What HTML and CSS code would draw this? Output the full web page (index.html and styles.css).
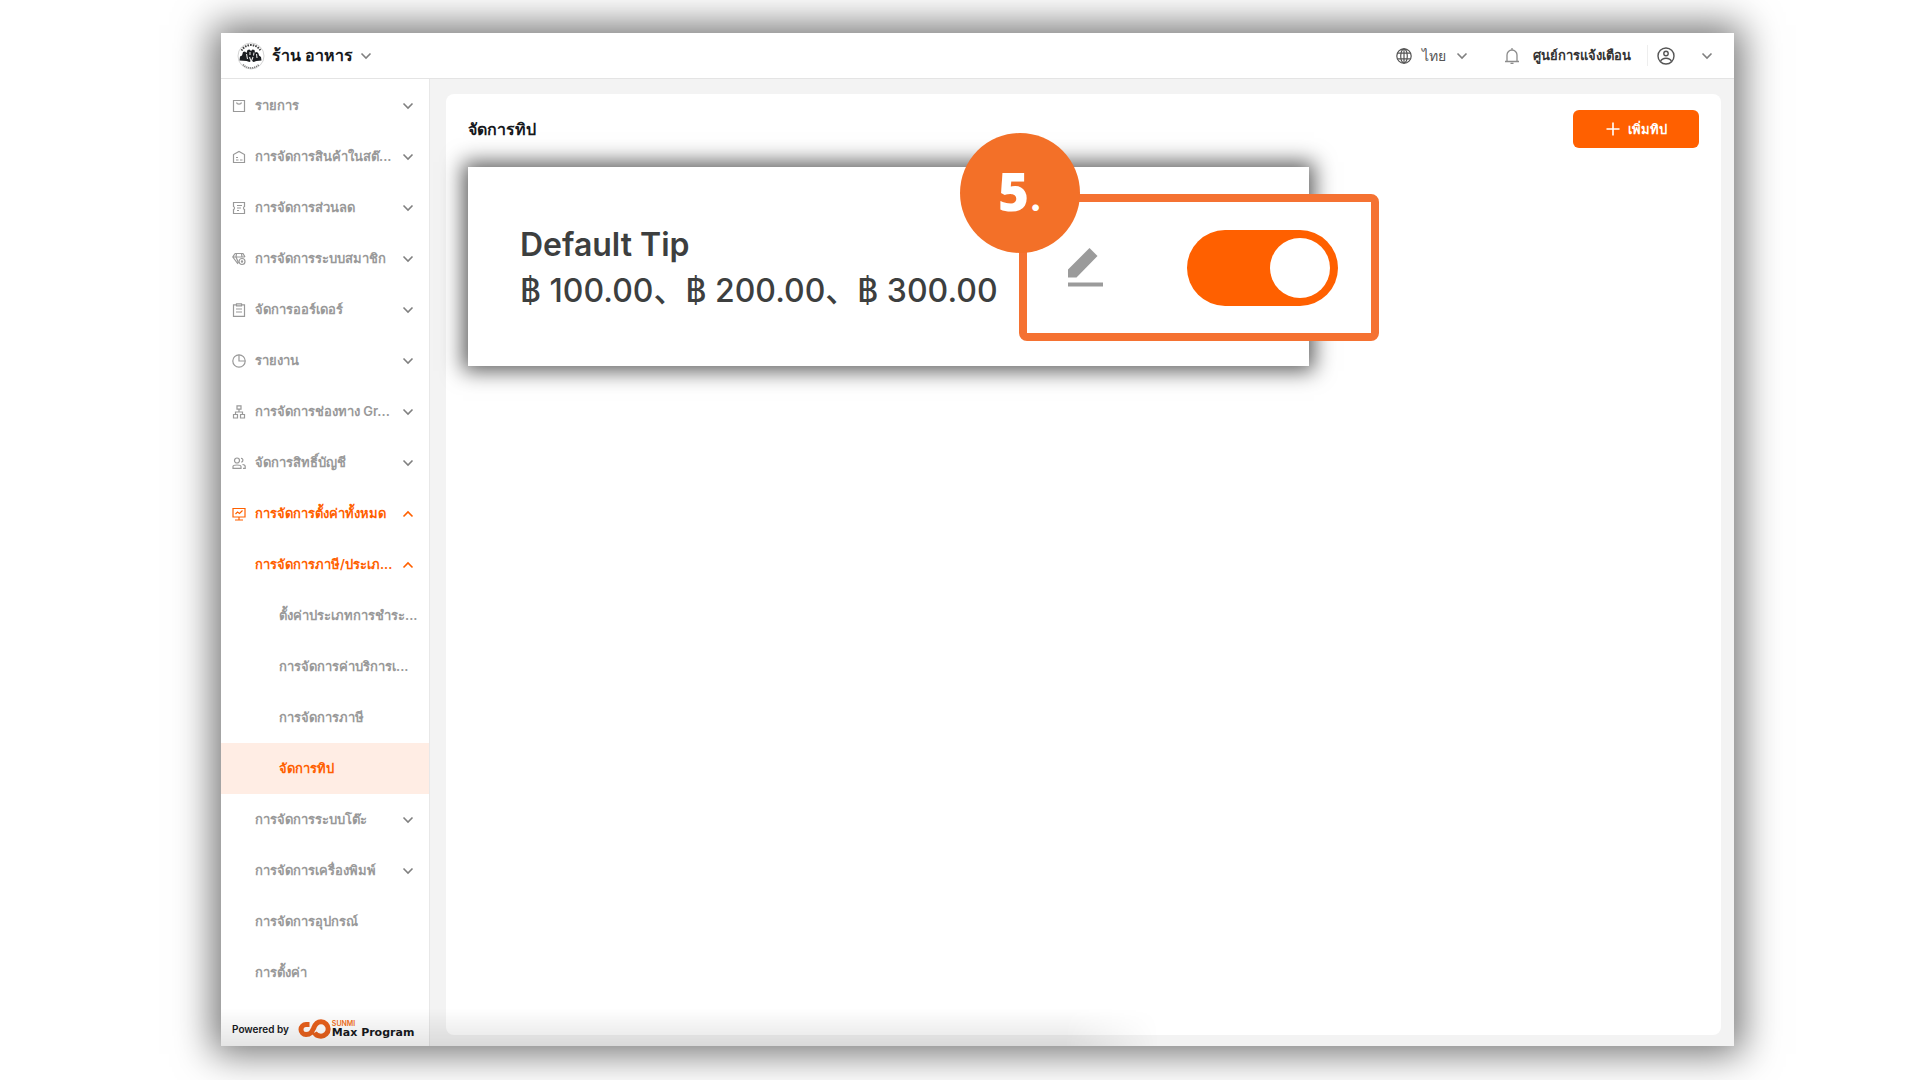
FILE: index.html
```html
<!DOCTYPE html>
<html lang="th">
<head>
    <meta charset="UTF-8">
    <title>จัดการทิป</title>
    <link rel="stylesheet" href="styles.css">
</head>
<body>
    <!-- shared chevron -->
    <svg class="defs" width="0" height="0">
        <symbol id="chevron" viewBox="0 0 12 12"><path d="M1.500 3.500 6 8l4.500-4.500" fill="none" stroke="currentColor" stroke-width="1.600"/></symbol>
    </svg>

    <div class="window">
        <header class="topbar">
            <button class="store">
                <svg class="store-logo" viewBox="0 0 28 28">
                    <circle cx="14" cy="14" r="13" fill="#fff" stroke="#c8c8c8" stroke-width=".8"/>
                    <path d="M4.500 8.500A11 11 0 0 1 23.500 8.500" fill="none" stroke="#444" stroke-width="2" stroke-dasharray="1.600 1"/>
                    <path d="M6 22.500a11 11 0 0 0 16 0" fill="none" stroke="#777" stroke-width="1.600" stroke-dasharray="1.200 .8"/>
                    <path d="M2.500 18.500l.5-4 2-1 1-3.500 2-.5 1.500 1.500 1-3 2-.5 1.500 1.500 1.500-1.500 2 .5.500 2.500 2-.5 1.500 1.500.5 2 2 1.500.5 3.500-5 .5-3 1-2-1.500-2 1.500-3-1z" fill="#1b1d20"/>
                    <path d="M9.500 12l1 5M13 10v3M17 10.500l-.5 3M12.500 15l1.500 4M16 15l-1.500 4M19.500 12l.5 4" stroke="#e4e4e4" stroke-width="1.100"/>
                </svg>
                <span>ร้าน อาหาร</span>
                <svg class="chev"><use href="#chevron"/></svg>
            </button>
            <div class="tools">
                <button class="lang">
                    <svg class="icon-16" viewBox="0 0 16 16" fill="none" stroke="currentColor" stroke-width="1.200"><circle cx="8" cy="8" r="7.200"/><ellipse cx="8" cy="8" rx="3.300" ry="7.200"/><path d="M8 .8v14.400M1.500 5.200h13M1.500 10.800h13"/></svg>
                    <span>ไทย</span>
                    <svg class="chev"><use href="#chevron"/></svg>
                </button>
                <button class="notice">
                    <svg class="icon-16" viewBox="0 0 16 16" fill="none" stroke="#8c8c8c" stroke-width="1.300"><path d="M1 13.500h14M3 13.500V7a5 5 0 0 1 10 0v6.500M8 0v2M6.500 15.400h3"/></svg>
                    <span>ศูนย์การแจ้งเตือน</span>
                </button>
                <button class="account" aria-label="Account">
                    <svg class="icon-18" viewBox="0 0 18 18" fill="none" stroke="currentColor" stroke-width="1.400"><circle cx="9" cy="9" r="8"/><circle cx="9" cy="6.500" r="2.200"/><path d="M3.500 14.500c1-2.400 3-3.300 5.500-3.300s4.500.9 5.500 3.300"/></svg>
                    <svg class="chev"><use href="#chevron"/></svg>
                </button>
            </div>
        </header>

        <div class="body">
            <aside class="sidebar">
                <nav class="menu">
                    <button class="item">
                        <svg class="icon" viewBox="0 0 14 14"><path d="M1.500 1.500h11v11h-11zM4.500 3.500c.5 2.200 4.500 2.200 5 0"/></svg>
                        <span>รายการ</span><svg class="chev"><use href="#chevron"/></svg>
                    </button>
                    <button class="item">
                        <svg class="icon" viewBox="0 0 14 14"><path d="M1.500 12.500v-8L7 1.500l5.500 3v8zM4 7.500h2M4 10h2.500M8 10h2.500" /></svg>
                        <span>การจัดการสินค้าในสต๊...</span><svg class="chev"><use href="#chevron"/></svg>
                    </button>
                    <button class="item">
                        <svg class="icon" viewBox="0 0 14 14"><path d="M1.500 1.500h11v4c-1.300.3-1.300 2.700 0 3v4h-11v-4c1.300-.3 1.300-2.700 0-3zM5 4.500h5M5 7h4M5 9.500h2"/></svg>
                        <span>การจัดการส่วนลด</span><svg class="chev"><use href="#chevron"/></svg>
                    </button>
                    <button class="item">
                        <svg class="icon" viewBox="0 0 14 14"><path d="M3 1.500h8l2 3.500M3 1.500.8 5l5.200 7M.8 5h12M4.500 1.500 4 5l2.500 6M9.500 1.500 10 5"/><circle cx="10" cy="9.500" r="3"/><circle cx="10" cy="9.500" r=".6"/></svg>
                        <span>การจัดการระบบสมาชิก</span><svg class="chev"><use href="#chevron"/></svg>
                    </button>
                    <button class="item">
                        <svg class="icon" viewBox="0 0 14 14"><path d="M4.500 1.800H1.500v11.500h11V1.800h-3M4.500.8h5v2h-5zM4 6h6M4 9h6"/></svg>
                        <span>จัดการออร์เดอร์</span><svg class="chev"><use href="#chevron"/></svg>
                    </button>
                    <button class="item">
                        <svg class="icon" viewBox="0 0 14 14"><circle cx="7" cy="7" r="6.200"/><path d="M7 .8V7h6.200"/></svg>
                        <span>รายงาน</span><svg class="chev"><use href="#chevron"/></svg>
                    </button>
                    <button class="item">
                        <svg class="icon" viewBox="0 0 14 14"><path d="M5 .8h4v3.400H5zM1.500 9.500h4v3.500h-4zM8.500 9.500h4v3.500h-4zM7 4.200V7M3.500 9.500V7h7v2.500"/></svg>
                        <span>การจัดการช่องทาง Gr...</span><svg class="chev"><use href="#chevron"/></svg>
                    </button>
                    <button class="item">
                        <svg class="icon" viewBox="0 0 14 14"><circle cx="5" cy="4.500" r="2.500"/><path d="M1 12.300V10.500C1 8.500 9 8.500 9 10.500v1.800zM9 2.500c2.500-.5 2.500 3.500.3 3.700M10.500 8.500c2 .2 2.700 1 2.700 2v1.800H11"/></svg>
                        <span>จัดการสิทธิ์บัญชี</span><svg class="chev"><use href="#chevron"/></svg>
                    </button>
                    <button class="item open">
                        <svg class="icon" viewBox="0 0 14 14"><path d="M1 1.500h12v8.500H1zM3 13h8M7 10v3M3.500 7l2-2 2 1.500 3-3"/></svg>
                        <span>การจัดการตั้งค่าทั้งหมด</span><svg class="chev"><use href="#chevron"/></svg>
                    </button>
                    <button class="item level-2 open"><span>การจัดการภาษี/ประเภ...</span><svg class="chev"><use href="#chevron"/></svg></button>
                    <a class="item level-3" href="#">ตั้งค่าประเภทการชำระ...</a>
                    <a class="item level-3" href="#">การจัดการค่าบริการเ...</a>
                    <a class="item level-3" href="#">การจัดการภาษี</a>
                    <a class="item level-3 active" href="#">จัดการทิป</a>
                    <button class="item level-2"><span>การจัดการระบบโต๊ะ</span><svg class="chev"><use href="#chevron"/></svg></button>
                    <button class="item level-2"><span>การจัดการเครื่องพิมพ์</span><svg class="chev"><use href="#chevron"/></svg></button>
                    <a class="item level-2" href="#">การจัดการอุปกรณ์</a>
                    <a class="item level-2" href="#">การตั้งค่า</a>
                </nav>
                <div class="powered">
                    <span>Powered by</span>
                    <svg class="brand-mark" viewBox="0 0 34 20" fill="none" stroke="#e9611c" stroke-width="5"><path d="M11.500 5.500H8a5 5 0 0 0 0 10c4.500 0 5.500-2 7.500-6C17.200 5 19 2.800 23 2.800a7.200 7.200 0 0 1 0 14.400c-3 0-5.500-1.500-6.500-3.500"/></svg>
                    <div class="brand">
                        <small>SUNMI</small>
                        <strong>Max Program</strong>
                    </div>
                </div>
            </aside>

            <main class="main">
                <section class="panel">
                    <div class="panel-head">
                        <h1>จัดการทิป</h1>
                        <button class="add">
                            <svg class="plus" viewBox="0 0 14 14"><path d="M7 .5v13M.5 7h13" stroke="#fff" stroke-width="1.600"/></svg>
                            <span>เพิ่มทิป</span>
                        </button>
                    </div>

                    <div class="tip">
                        <h2>Default Tip</h2>
                        <p>฿ 100.00、฿ 200.00、฿ 300.00</p>

                        <div class="callout">
                            <span class="step">5<small>.</small></span>
                            <button class="edit" aria-label="Edit tip">
                                <svg viewBox="0 0 35 39" fill="#9b9b9b"><path d="M21.500 0l8 8L8.500 29.500H0V21.500zM0 34.500h35v4H0z"/></svg>
                            </button>
                            <input class="switch" type="checkbox" aria-label="Enable tip" checked>
                        </div>
                    </div>
                </section>
            </main>
        </div>
    </div>
</body>
</html>
```
FILE: styles.css
```css
* { box-sizing: border-box; margin: 0; }
body { min-height: 100vh; display: flex; padding: 33px 186px 34px 221px; background: #fff; color: #17191d; font-family: Inter, "Noto Sans", "Noto Sans CJK JP", sans-serif; font-size: 13px; }
button { border: none; background: none; padding: 0; font: inherit; color: inherit; cursor: pointer; }
a { color: inherit; text-decoration: none; }
svg { flex: none; display: block; }
.defs { position: absolute; }
.chev { width: 12px; height: 12px; color: #808080; }

.window { flex: 1; position: relative; display: flex; flex-direction: column; background: #f3f3f3; box-shadow: 0 0 36px 8px rgba(0,0,0,0.55); }

/* top bar */
.topbar { display: flex; justify-content: space-between; align-items: center; height: 46px; padding: 0 21px 0 16px; background: #fff; border-bottom: 1px solid #e4e4e4; }
.store { display: flex; align-items: center; gap: 7px; font-size: 16px; font-weight: 600; }
.store-logo { width: 28px; height: 28px; }
.tools { display: flex; align-items: center; color: #555; }
.lang, .notice, .account { display: flex; align-items: center; }
.lang { gap: 10px; font-size: 14px; }
.notice { gap: 13px; margin-left: 36px; padding-right: 16px; border-right: 1px solid #eee; color: #333; font-weight: 600; }
.account { gap: 26px; margin-left: 9px; }
.icon-16 { width: 16px; height: 16px; }
.icon-18 { width: 18px; height: 18px; }

/* sidebar */
.body { flex: 1; display: flex; }
.sidebar { width: 209px; display: flex; flex-direction: column; background: #fff; border-right: 1px solid #e8e8e8; }
.menu { padding-top: 1px; }
.item { display: flex; align-items: center; width: 100%; height: 51px; padding: 0 15px 0 11px; color: #999; font-weight: 600; text-align: left; white-space: nowrap; }
.item span { flex: 1; }
.icon { width: 14px; height: 14px; margin-right: 9px; fill: none; stroke: currentColor; stroke-width: 1.2; }
.level-2 { padding-left: 34px; }
.level-3 { padding-left: 58px; }
.open, .active { color: #ff6000; }
.open .chev { color: #ff6000; transform: rotate(180deg); }
.active { background: #ffede4; }
.powered { display: flex; align-items: center; margin-top: auto; height: 34px; padding-left: 11px; font-size: 10px; font-weight: 600; white-space: nowrap; }
.brand-mark { width: 34px; height: 20px; margin-left: 9px; }
.brand { line-height: 10px; }
.brand small { display: block; height: 6px; color: #f37021; font-size: 7px; line-height: 6px; }
.brand strong { font-family: "DejaVu Sans", sans-serif; font-size: 11px; }

/* content */
.main { flex: 1; display: flex; padding: 15px 13px 11px 16px; }
.panel { flex: 1; padding: 16px 22px; background: #fff; border-radius: 8px; }
.panel-head { display: flex; justify-content: space-between; align-items: center; margin-bottom: 19px; }
.panel-head h1 { font-size: 16px; font-weight: 600; }
.add { display: flex; align-items: center; justify-content: center; gap: 8px; width: 126px; height: 38px; border-radius: 6px; background: #ff6000; color: #fff; font-weight: 600; }
.plus { width: 14px; height: 14px; }
.tip { position: relative; max-width: 841px; padding: 55px 52px 53px; background: #fff; box-shadow: 0 0 20px 5px rgba(0,0,0,0.64); color: #3d3f3f; }
.tip h2 { font-size: 32px; font-weight: 600; line-height: 46px; }
.tip p { font-size: 32px; font-weight: 500; line-height: 45px; white-space: nowrap; }

/* step callout laid over the tip card */
.callout { position: absolute; top: 27px; right: -70px; display: flex; align-items: center; justify-content: space-between; width: 360px; height: 147px; padding: 0 33px 0 41px; background: #fff; border: 8px solid #f57232; border-radius: 8px; }
.step { position: absolute; top: -69px; left: -67px; display: flex; align-items: baseline; justify-content: center; width: 120px; height: 120px; border-radius: 50%; background: #f37028; color: #fff; font-family: "Open Sans", sans-serif; font-size: 53px; font-weight: 800; line-height: 116px; }
.step small { font-family: Inter, sans-serif; font-size: 36px; }
.edit svg { width: 35px; height: 39px; }
.switch { appearance: none; width: 151px; height: 76px; padding: 8px; border-radius: 38px; background: #ff6000; cursor: pointer; }
.switch::before { content: ""; display: block; width: 60px; height: 60px; border-radius: 50%; background: #fff; }
.switch:checked::before { margin-left: auto; }

/* soft shade along the bottom left edge */
.window::after { content: ""; position: absolute; left: 0; bottom: 0; width: 62%; height: 38px; background: linear-gradient(to top, rgba(0,0,0,0.1), transparent); mask-image: linear-gradient(to right, #000 90%, transparent); pointer-events: none; }
```
